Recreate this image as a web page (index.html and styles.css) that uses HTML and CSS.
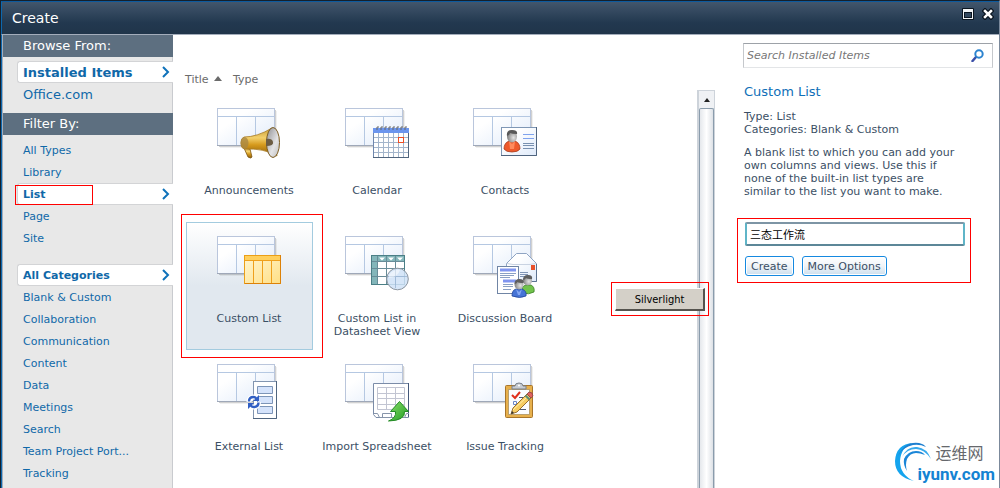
FILE: index.html
```
<!DOCTYPE html>
<html lang="en">
  <head>
    <meta charset="utf-8">
    <title>Create</title>
    <link rel="stylesheet" href="styles.css">
  </head>
  <body>
    <!-- shared gradients and the grey list that sits behind every icon -->
    <svg class="defs" width="0" height="0" aria-hidden="true">
      <defs>
        <linearGradient id="sheet" x1="0" y1="0" x2="1" y2="1">
          <stop offset="0.3" stop-color="#fff"/><stop offset="1" stop-color="#dfeafa"/>
        </linearGradient>
        <linearGradient id="gold" x1="0" y1="0" x2="0" y2="1">
          <stop offset="0" stop-color="#c79b35"/><stop offset="0.35" stop-color="#f3d06c"/><stop offset="0.6" stop-color="#d69a1c"/><stop offset="1" stop-color="#8a5c0a"/>
        </linearGradient>
        <linearGradient id="cone" x1="0" y1="0" x2="1" y2="1">
          <stop offset="0" stop-color="#8d8d90"/><stop offset="0.6" stop-color="#e4e4e6"/><stop offset="1" stop-color="#bbb"/>
        </linearGradient>
        <linearGradient id="yellow" x1="0" y1="0" x2="1" y2="1">
          <stop offset="0" stop-color="#fff6d2"/><stop offset="1" stop-color="#ffdf85"/>
        </linearGradient>
        <linearGradient id="green" x1="0" y1="0" x2="1" y2="1">
          <stop offset="0" stop-color="#8be06a"/><stop offset="1" stop-color="#1f9a22"/>
        </linearGradient>
        <radialGradient id="head" cx="0.65" cy="0.6" r="0.6">
          <stop offset="0" stop-color="#e4e4e4"/><stop offset="1" stop-color="#858585"/>
        </radialGradient>
        <symbol id="list" viewBox="0 0 64 62">
          <path d="M2 38.500h56.500V2" fill="none" stroke="#000" stroke-opacity="0.180"/>
          <path d="M3 39.500h56.500V3" fill="none" stroke="#000" stroke-opacity="0.060"/>
          <rect x="0.500" y="0.500" width="57" height="37" fill="url(#sheet)" stroke="#bac6dc"/>
          <path d="M1 8.500h56M19.500 9v28M38.500 9v28" stroke="#b5c8e2" fill="none"/>
          <path d="M0 37.500h58" stroke="#9fa8b8"/>
        </symbol>
      </defs>
    </svg>

    <div class="dialog">
      <header class="titlebar">
        <h1>Create</h1>
        <div class="window-buttons">
          <button type="button" aria-label="Maximize">
            <svg width="12" height="12"><rect width="12" height="12" rx="1" fill="#0c1620"/><path fill="#f2f4f6" fill-rule="evenodd" d="M1 1h10v10H1zM2 4v6h8V4z"/><path fill="#33485e" d="M3 5h6v4H3z"/></svg>
          </button>
          <button type="button" aria-label="Close">
            <svg width="12" height="12"><path d="M3 3l6 6M9 3l-6 6" stroke="#0c1620" stroke-width="5" stroke-linecap="square"/><path d="M3 3l6 6M9 3l-6 6" stroke="#fff" stroke-width="2.500" stroke-linecap="square"/></svg>
          </button>
        </div>
      </header>

      <div class="content">
        <nav class="sidebar">
          <h2>Browse From:</h2>
          <ul class="sources">
            <li class="active"><a href="#">Installed Items</a><svg class="chevron" width="8" height="12"><path d="M1 1l5 5-5 5"/></svg></li>
            <li><a href="#">Office.com</a></li>
          </ul>
          <h2>Filter By:</h2>
          <ul class="types">
            <li><a href="#">All Types</a></li>
            <li><a href="#">Library</a></li>
            <li class="active"><a href="#">List</a><svg class="chevron" width="8" height="12"><path d="M1 1l5 5-5 5"/></svg><span class="mark mark-list"></span></li>
            <li><a href="#">Page</a></li>
            <li><a href="#">Site</a></li>
          </ul>
          <ul class="categories">
            <li class="active"><a href="#">All Categories</a><svg class="chevron" width="8" height="12"><path d="M1 1l5 5-5 5"/></svg></li>
            <li><a href="#">Blank &amp; Custom</a></li>
            <li><a href="#">Collaboration</a></li>
            <li><a href="#">Communication</a></li>
            <li><a href="#">Content</a></li>
            <li><a href="#">Data</a></li>
            <li><a href="#">Meetings</a></li>
            <li><a href="#">Search</a></li>
            <li><a href="#">Team Project Port...</a></li>
            <li><a href="#">Tracking</a></li>
          </ul>
        </nav>

        <main class="gallery">
          <div class="sort">
            <a href="#">Title <svg width="8" height="5"><path d="M0 5l4-5 4 5z" fill="#6b6b6b"/></svg></a>
            <a href="#">Type</a>
          </div>
          <div class="scroll-area">
            <div class="tiles">
              <button type="button" class="tile">
                <svg width="64" height="62" viewBox="0 0 64 62">
                  <use href="#list"/>
                  <path d="M27 40l4 9q3 2 4 0l-2-8z" fill="url(#gold)" stroke="#7a5310" stroke-width="0.800"/>
                  <path d="M27 29q13 0 28-9l5 28Q47 40 27 41q-3-1-3-6t3-6z" fill="url(#gold)" stroke="#a87b25" stroke-width="0.800"/>
                  <ellipse cx="27.500" cy="35" rx="4" ry="6" fill="#a98742" opacity="0.800"/>
                  <ellipse cx="56" cy="34.500" rx="6.500" ry="15" fill="url(#cone)" stroke="#7c5c22"/>
                  <path d="M49 31q6-1 7 3t-7 4z" fill="#6c5c43"/>
                </svg>
                <span>Announcements</span>
              </button>
              <button type="button" class="tile">
                <svg width="64" height="62" viewBox="0 0 64 62">
                  <use href="#list"/>
                  <rect x="28.500" y="20.500" width="35" height="29" fill="#fff" stroke="#6f87ae"/>
                  <rect x="28" y="20" width="36" height="5" fill="#6b95ee"/>
                  <path d="M33.500 25v24M38.500 25v24M43.500 25v24M48.500 25v24M53.500 25v24M58.500 25v24M29 29.500h34M29 34.500h34M29 39.500h34M29 44.500h34" stroke="#a3b5cb"/>
                  <path d="M28 49.500h36M63.500 25v25" stroke="#50657d"/>
                  <path d="M32 22v-3h2M36 22v-3h2M40 22v-3h2M44 22v-3h2M48 22v-3h2M52 22v-3h2M56 22v-3h2M60 22v-3h2" fill="none" stroke="#666"/>
                  <rect x="53.500" y="29.500" width="5" height="5" fill="#fff" stroke="#f04e23"/>
                </svg>
                <span>Calendar</span>
              </button>
              <button type="button" class="tile">
                <svg width="64" height="62" viewBox="0 0 64 62">
                  <use href="#list"/>
                  <rect x="28.500" y="19.500" width="35" height="28" fill="url(#sheet)" stroke="#7f97b5"/>
                  <path d="M28 47.500h35.500V19" fill="none" stroke="#4f647e"/>
                  <path d="M31 41q0-6 5-8h6q5 2 5 8-2 3-8 3t-8-3z" fill="#ee5a2c" stroke="#a83a1b" stroke-width="0.800"/>
                  <path d="M36 33l3 3 3-3-1 8h-4z" fill="#ff8a5c"/>
                  <ellipse cx="39" cy="28.500" rx="5" ry="6" fill="url(#head)"/>
                  <path d="M34 28q-1-6 5-6t5 4q-5 0-7-1-1 3-3 3z" fill="#585858"/>
                  <path d="M50 26.500h11M50 30.500h11" stroke="#7fa3ee"/><path d="M50 35.500h11M50 37.500h11M50 40.500h11" stroke="#7890b0"/>
                </svg>
                <span>Contacts</span>
              </button>
              <button type="button" class="tile selected">
                <svg width="64" height="62" viewBox="0 0 64 62">
                  <use href="#list"/>
                  <rect x="27.500" y="19.500" width="36" height="28" fill="url(#yellow)" stroke="#eb9f17"/>
                  <rect x="28" y="20" width="35" height="4" fill="#ffcf5c"/>
                  <path d="M28 24.500h35M36.500 25v22M45.500 25v22M54.500 25v22" stroke="#efa01c"/>
                  <path d="M28 47.500h35.500V19" fill="none" stroke="#dc8108"/>
                </svg>
                <span>Custom List</span>
              </button>
              <button type="button" class="tile">
                <svg width="64" height="62" viewBox="0 0 64 62">
                  <use href="#list"/>
                  <rect x="26.500" y="19.500" width="33" height="29" fill="#fff" stroke="#4b7f86"/>
                  <path d="M27 20h32v5H33v23h-6z" fill="#83b6ba"/>
                  <path d="M27 25.500h32M32.500 20v28M27 32.500h32M27 40.500h32M41.500 20v28M50.500 20v28" stroke="#688c98"/>
                  <path d="M34 21.500h6l-3 3zM43 21.500h6l-3 3zM52 21.500h6l-3 3z" fill="#fff"/>
                  <circle cx="52.500" cy="43" r="10.800" fill="#cfe2f7" fill-opacity="0.850" stroke="#8b949e"/>
                  <path d="M50.500 34v18M43 40.500h19" stroke="#94afd0" opacity="0.700"/>
                  <path d="M44 39q4-6 11-5-2 7-11 8z" fill="#fff" opacity="0.500"/>
                </svg>
                <span>Custom List in Datasheet View</span>
              </button>
              <button type="button" class="tile">
                <svg width="64" height="62" viewBox="0 0 64 62">
                  <use href="#list"/>
                  <path d="M33.500 45.500v-18l10-10h10l10 10v18z" fill="url(#sheet)" stroke="#8fa4c3"/>
                  <path d="M34 27.500l6 1h17l6-1" fill="none" stroke="#c9d3e2"/>
                  <path d="M63.500 28v17.500H46" fill="none" stroke="#5d7391"/>
                  <rect x="58" y="29" width="4" height="5" fill="#e8512b"/>
                  <path d="M47 36.500h8M47 38.500h8M47 40.500h6" stroke="#8195b5"/>
                  <rect x="24.500" y="30.500" width="21" height="27" fill="#fff" stroke="#7085a5"/>
                  <path d="M27 34h16M30 45h13" stroke="#8095f0" stroke-width="3"/>
                  <path d="M27 37.500h16M27 39.500h14M27 41.500h10M30 48.500h10M30 50.500h10M30 53.500h8" stroke="#8aa0c4"/>
                  <path d="M49 57q-1-7 4-8h5q4 2 3 7-5 3-12 1z" fill="#72c34b" stroke="#397f25" stroke-width="0.800"/>
                  <ellipse cx="54.500" cy="44.500" rx="4.500" ry="5" fill="url(#head)"/>
                  <path d="M50 44q0-5 5-5t4 4q-5 0-6-1-1 2-3 2z" fill="#5e5e5e"/>
                  <path d="M39 60q0-6 4-7h6q5 2 4 7-6 3-14 0z" fill="#4674d6" stroke="#21459b" stroke-width="0.800"/>
                  <path d="M43 53l3 3 3-3-2 6h-2z" fill="#83a6f2"/>
                  <ellipse cx="46" cy="48.500" rx="4.500" ry="5" fill="url(#head)"/>
                  <path d="M41.500 48q0-5 5-5t4 4q-5 0-6-1-1 2-3 2z" fill="#5e5e5e"/>
                </svg>
                <span>Discussion Board</span>
              </button>
              <button type="button" class="tile">
                <svg width="64" height="62" viewBox="0 0 64 62">
                  <use href="#list"/>
                  <rect x="36.500" y="17.500" width="23" height="37" fill="#fff" stroke="#8295b0"/>
                  <path d="M36 54.500h23.500V17" fill="none" stroke="#50657f"/>
                  <path d="M40.500 22.500h15v7h-15zM40.500 32.500h15v7h-15zM40.500 42.500h15v7h-15z" fill="#d5e3fb" stroke="#7d95b8"/>
                  <path d="M32 38q0-5 5-5 2 0 3 2M41.500 38q0 5-5 5-2 0-3-2" fill="none" stroke="#fff" stroke-width="5"/>
                  <path d="M32 37.500q0-4.500 4.500-4.500 2 0 3 2M41.500 38.500q0 4.500-5 4.500-2 0-3-2" fill="none" stroke="#315fc4" stroke-width="2.400"/>
                  <path d="M42 31v6h-6zM31 45v-6h6z" fill="#315fc4"/>
                </svg>
                <span>External List</span>
              </button>
              <button type="button" class="tile">
                <svg width="64" height="62" viewBox="0 0 64 62">
                  <use href="#list"/>
                  <path d="M28.500 19.500h35v34H31l-2.500-3z" fill="#fff" stroke="#7b8ca8"/>
                  <path d="M63.500 19v34" stroke="#44587a"/>
                  <path d="M29 49.500h3.500l2 4h25l2-4H64M37.500 53v-3.500h9v4" fill="none" stroke="#8795aa"/>
                  <path d="M32.500 23.500h27v22h-27zM32.500 29.500h27M32.500 34.500h27M32.500 40.500h27M41.500 23.500v22M50.500 23.500v22" fill="none" stroke="#c2c5d2"/>
                  <path d="M54.500 37.500l9 10h-4q1 9-16 9.500 8-3 7-9.500h-5z" fill="url(#green)" stroke="#238b25"/>
                </svg>
                <span>Import Spreadsheet</span>
              </button>
              <button type="button" class="tile">
                <svg width="64" height="62" viewBox="0 0 64 62">
                  <use href="#list"/>
                  <rect x="32.500" y="21.500" width="27" height="32" rx="1" fill="#e7b04c" stroke="#a8752b"/>
                  <rect x="35.500" y="25.500" width="21" height="25" fill="#fbfcff" stroke="#b9a06f"/>
                  <path d="M39 25v-3h3q0-3 4-3t4 3h3v3z" fill="#c7ccd3" stroke="#78808b"/><circle cx="46" cy="21.500" r="1" fill="#fff"/>
                  <path d="M39 31l3 3 5-6" fill="none" stroke="#e0301e" stroke-width="2"/>
                  <path d="M46 33.500h8M45 39.500h8M45 45.500h8" stroke="#4f5a70"/>
                  <path d="M40.500 37.500h3v3h-3z" fill="#fff" stroke="#6a86c8"/>
                  <path d="M38 50l2-6 14-14 4 4-14 14z" fill="#f6cc62" stroke="#987030"/>
                  <path d="M40 46l15-14" stroke="#fff0ad"/>
                  <path d="M54 30l2-2q4 0 4 4l-2 2z" fill="#e0625d" stroke="#8d4244" stroke-width="0.800"/>
                  <path d="M52.500 31.500l4 4" stroke="#5c8d75" stroke-width="2"/><path d="M38 50l1-3 2 2z" fill="#333"/>
                </svg>
                <span>Issue Tracking</span>
              </button>
            </div>
            <div class="scrollbar">
              <button type="button" aria-label="Scroll up"><svg width="6" height="4"><path d="M0 4l3-4 3 4z" fill="#222"/></svg></button>
              <div class="thumb"></div>
            </div>
            <div class="context-menu"><button type="button">Silverlight</button></div>
            <span class="mark mark-tile"></span>
          </div>
        </main>

        <aside class="details">
          <div class="search">
            <input type="search" aria-label="Search Installed Items" placeholder="Search Installed Items">
            <button type="button" aria-label="Search">
              <svg width="13" height="13"><path d="M5 8l-3.500 4" stroke="#3b4fa8" stroke-width="2.500" stroke-linecap="round"/><circle cx="8" cy="5" r="3.700" fill="#fff" stroke="#2b83cf" stroke-width="2"/></svg>
            </button>
          </div>
          <h2>Custom List</h2>
          <p>Type: List<br>Categories: Blank &amp; Custom</p>
          <p class="description">A blank list to which you can add your own columns and views. Use this if none of the built-in list types are similar to the list you want to make.</p>
          <form class="create-form">
            <input type="text" aria-label="Name" value="三态工作流">
            <div class="actions">
              <button type="submit">Create</button>
              <button type="button">More Options</button>
            </div>
          </form>
        </aside>
      </div>

      <div class="watermark">
        <svg width="38" height="42" viewBox="0 0 38 42">
          <path d="M20 40Q1 36 1 20 2 3 19 2 7 6 6 20q0 14 14 20z" fill="#14a4ee"/>
          <path d="M4 15Q11 0 25 2q5 1 7 4Q26 3 19 4 9 6 4 15z" fill="#1d7fd0"/>
          <path d="M8 16Q13 5 23 6q10 1 14 12Q30 8 22 8 13 8 8 16z" fill="#36a9ec"/>
          <path d="M10 18q4-8 12-8 6 0 9 4-5-2-9-2-6 0-9 6-2 6 0 12-4-6-3-12z" fill="#1b86d8"/>
        </svg>
        <div class="watermark-text"><span>运维网</span><strong>iyunv.com</strong></div>
      </div>
    </div>
  </body>
</html>
```

FILE: styles.css
```
* {
  box-sizing: border-box;
}
body {
  margin: 0;
  font-family: "DejaVu Sans", Verdana, "Noto Sans CJK SC", sans-serif;
  font-size: 11px;
  line-height: 13px;
  color: #3b4f65;
  background: #fff;
}
h1,
h2,
p,
ul {
  margin: 0;
  padding: 0;
  font-weight: normal;
}
ul {
  list-style: none;
}
a {
  color: #1068a8;
  text-decoration: none;
}
button,
input {
  font-family: inherit;
  font-size: 11px;
  color: inherit;
}
button {
  padding: 0;
  border: none;
  background: none;
  cursor: pointer;
}
.defs {
  position: absolute;
}
.dialog {
  position: relative;
  display: flex;
  flex-direction: column;
  min-height: 100vh;
  border-top: 1px solid #14202c;
  border-left: 1px solid #14202c;
  border-right: 1px solid #7b899b;
}

/* Title bar */
.titlebar {
  display: flex;
  align-items: center;
  justify-content: space-between;
  height: 34px;
  padding: 0 5px 0 10px;
  border-top: 1px solid #0c5a9e;
  border-bottom: 1px solid #a3adbb;
  border-left: 1px solid #0c67ae;
  background: linear-gradient(#42566c, #22384f 65%, #20354a);
}
.titlebar h1 {
  font-size: 14px;
  line-height: 18px;
  color: #fff;
}
.window-buttons {
  display: flex;
  gap: 8px;
  padding-bottom: 8px;
}
.window-buttons svg {
  display: block;
}

.content {
  display: flex;
  flex: 1;
  border-left: 1px solid #0c67ae;
}

/* Sidebar */
.sidebar {
  width: 171px;
  flex: none;
  border-left: 1px solid #a3adbb;
  background: linear-gradient(#c9cbcf, #c9cbcf) right / 1px 100% no-repeat #e8e8e8;
}
.sidebar h2 {
  height: 22px;
  padding-left: 20px;
  font-size: 13px;
  line-height: 22px;
  color: #fff;
  background: #5d6f80;
}
.sidebar li {
  position: relative;
  display: flex;
  align-items: center;
  justify-content: space-between;
  height: 22px;
  margin-left: 14px;
  padding: 0 3px 0 5px;
  border: 1px solid transparent;
  border-right: none;
}
.sidebar .active {
  border-color: #d3d4d6;
  border-radius: 3px 0 0 3px;
  background: #fff;
  font-weight: bold;
}
.sources {
  padding: 4px 0 8px;
  font-size: 13px;
}
.types {
  padding: 4px 0 15px;
}
.chevron path {
  fill: none;
  stroke: #0f72ba;
  stroke-width: 2;
}

/* Red highlight frames */
.mark {
  position: absolute;
  border: 1px solid #f00;
  pointer-events: none;
}
.mark-list {
  top: 1px;
  left: -3px;
  width: 78px;
  height: 20px;
}
.mark-tile {
  top: 124px;
  left: 8px;
  width: 142px;
  height: 144px;
}

/* Gallery */
.gallery {
  display: flex;
  flex: 1;
  flex-direction: column;
}
.sort {
  display: flex;
  gap: 11px;
  padding: 38px 0 4px 12px;
}
.sort a {
  color: #6b6b6b;
}
.sort svg {
  margin: 0 0 2px 2px;
}
.scroll-area {
  position: relative;
  display: flex;
  flex: 1;
  justify-content: space-between;
}
.tiles {
  display: grid;
  grid-template-columns: repeat(3, 128px);
  grid-auto-rows: 128px;
  padding: 4px 0 0 12px;
}
.tile {
  display: flex;
  flex-direction: column;
  align-items: center;
  gap: 14px;
  margin-left: 1px;
  padding: 13px 5px 0 4px;
  border: 1px solid transparent;
  line-height: 13px;
}
.tile svg {
  flex: none;
}
.tile.selected {
  border-color: #a3cbdf;
  background: linear-gradient(#fff, #e1e8ef 50%);
}
.scrollbar {
  display: flex;
  flex-direction: column;
  width: 18px;
  border: 1px solid #cdd3da;
  border-left-width: 2px;
  border-bottom: none;
  background: #eff1f4;
}
.scrollbar button {
  display: flex;
  align-items: center;
  justify-content: center;
  height: 17px;
}
.thumb {
  flex: 1;
  border: 1px solid #8a9cac;
  border-bottom: none;
  border-radius: 2px 2px 0 0;
  background: linear-gradient(90deg, #e5e8ec, #fff 50%, #dde1e6);
}
.context-menu {
  position: absolute;
  top: 192px;
  right: 6px;
  padding: 5px 3px 4px;
  border: 1px solid #f00;
}
.context-menu button {
  display: block;
  width: 90px;
  height: 23px;
  border: 1px solid #fff;
  border-right: 2px solid #55534e;
  border-bottom: 2px solid #55534e;
  background: #d4d0c8;
  color: #000;
  font-family: "DejaVu Sans Condensed", Tahoma, sans-serif;
}

/* Details */
.details {
  display: flex;
  flex-direction: column;
  width: 284px;
  flex: none;
  padding: 8px 6px 0 28px;
}
.search {
  display: flex;
  align-items: center;
  height: 25px;
  padding: 0 8px 0 3px;
  border: 1px solid #c5c8cc;
  border-top-color: #9da2a8;
  border-bottom-color: #e3e5e7;
}
.search input {
  flex: 1;
  min-width: 0;
  padding: 0;
  border: none;
  outline: none;
  font-style: italic;
}
.search input::placeholder {
  color: #777;
}
.search svg {
  display: block;
}
.details h2 {
  padding: 16px 0 10px 1px;
  font-size: 13px;
  line-height: 16px;
  color: #0f6fb8;
}
.details p {
  padding-left: 1px;
}
.details .description {
  max-width: 220px;
  margin-top: 10px;
}
.create-form {
  width: 234px;
  margin: 20px 0 0 -6px;
  padding: 3px 5px 6px 7px;
  border: 1px solid #f00;
}
.create-form input {
  display: block;
  width: 100%;
  height: 24px;
  padding: 0 3px;
  border: 2px solid #5fb5c8;
  border-top-color: #7d95a5;
  border-bottom-color: #5c8798;
  border-radius: 2px;
  outline: none;
  color: #000;
}
.actions {
  display: flex;
  gap: 8px;
  margin-top: 10px;
}
.actions button {
  height: 20px;
  padding: 0 5px;
  border: 1px solid #1589e0;
  border-radius: 3px;
  background: linear-gradient(#fff, #f0f4f8 50%, #cddfed);
  box-shadow: inset 0 0 0 1px #fff;
}

/* Watermark */
.watermark {
  position: absolute;
  right: 4px;
  bottom: 5px;
  display: flex;
}
.watermark-text {
  display: flex;
  flex-direction: column;
  gap: 3px;
  margin-left: -15px;
}
.watermark-text span {
  padding-left: 18px;
  font-family: "Noto Sans CJK SC", sans-serif;
  font-size: 16px;
  line-height: 22px;
  color: #66686c;
}
.watermark-text strong {
  font-family: Roboto, sans-serif;
  font-size: 17px;
  line-height: 17px;
  color: #1483d2;
}
```
